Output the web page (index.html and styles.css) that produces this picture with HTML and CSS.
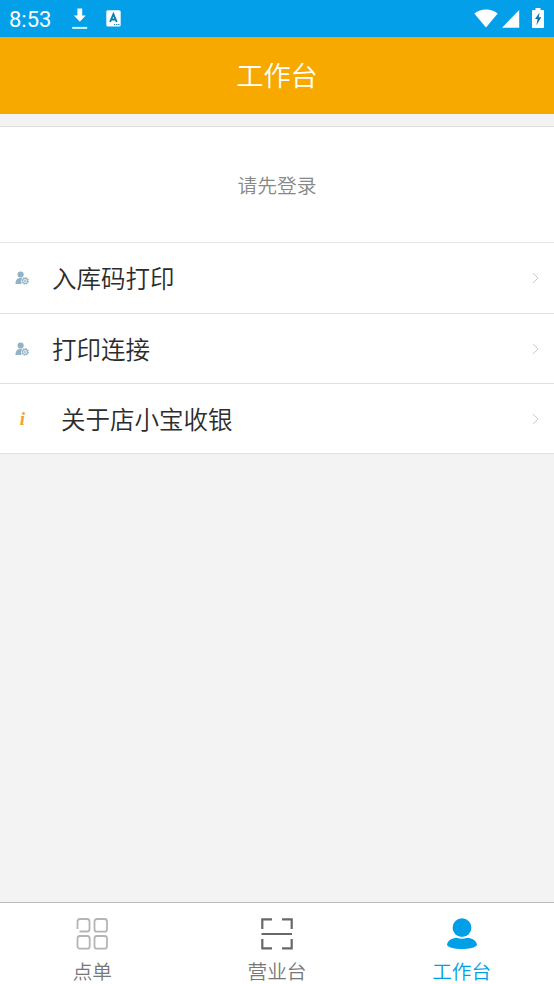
FILE: index.html
```html
<!DOCTYPE html>
<html lang="zh-CN">
<head>
<meta charset="utf-8">
<title>工作台</title>
<link rel="stylesheet" href="styles.css">
</head>
<body>
<svg class="defs" width="0" height="0" aria-hidden="true">
  <symbol id="user-gear" viewBox="0 0 14 14">
    <circle cx="5.6" cy="3.5" r="3.1" fill="currentColor"/>
    <path d="M.4 12.9C.6 9 2.2 7.2 4.5 7.1H7.2C6 8.3 5.7 11.1 6.6 12.9Z" fill="currentColor"/>
    <circle cx="10.1" cy="9.9" r="2.5" fill="none" stroke="currentColor" stroke-width="1.1"/>
    <circle cx="10.1" cy="9.9" r="3.3" fill="none" stroke="currentColor" stroke-width="1.1" stroke-dasharray="1.35 1.24"/>
    <circle cx="10.1" cy="9.9" r=".9" fill="none" stroke="currentColor" stroke-width=".9"/>
  </symbol>
  <symbol id="chevron" viewBox="0 0 7 12">
    <path d="M1 1L6 6L1 11" fill="none" stroke="currentColor" stroke-width="1"/>
  </symbol>
</svg>
<div class="screen">
  <div class="status">
    <span class="time">8:53</span>
    <svg class="download" width="16" height="22" viewBox="0 0 16 22"><path d="M5.4 0.5h4.8v7h3.5L7.8 13.8 1.9 7.5h3.5Z" fill="#fff"/><path d="M.2 18.9h15v2H.2Z" fill="#c8fcff"/></svg>
    <svg class="app" width="15" height="17" viewBox="0 0 15 17"><rect x=".3" y=".3" width="14.4" height="16.2" rx="1.5" fill="#fff"/><path d="M4.1 12L7.4 4.2L10.7 12M5.2 9.5H9.6" fill="none" stroke="#087fac" stroke-width="1.9"/><path d="M8 14.5h1.2M10.2 14.5h1.2M12.2 14.5h1.2" stroke="#087fac" stroke-width="1.2"/></svg>
    <svg class="wifi" width="24" height="19" viewBox="0 0 24 19"><path d="M.3 4.5C6.8-1 17.2-1 23.7 4.5L12 18.5Z" fill="#fff"/></svg>
    <svg class="signal" width="18" height="18" viewBox="0 0 18 18"><path d="M17.2 0V17.7H0Z" fill="#fff"/></svg>
    <svg class="battery" width="12" height="20" viewBox="0 0 12 20"><path d="M3.5 0h5v2H11q1 0 1 1V19q0 1-1 1H1q-1 0-1-1V3q0-1 1-1H3.5Z" fill="#fff"/><path d="M7.6 4.5L3 11H5.6L4.4 17.3L9.3 9.3H6.7Z" fill="#07a"/></svg>
  </div>
  <header class="header">工作台</header>
  <main class="content">
    <div class="login">请先登录</div>
    <div class="row"><svg class="row-icon"><use href="#user-gear"/></svg><span class="label">入库码打印</span><svg class="chevron"><use href="#chevron"/></svg></div>
    <div class="row"><svg class="row-icon"><use href="#user-gear"/></svg><span class="label">打印连接</span><svg class="chevron"><use href="#chevron"/></svg></div>
    <div class="row about"><span class="info">i</span><span class="label">关于店小宝收银</span><svg class="chevron"><use href="#chevron"/></svg></div>
  </main>
  <nav class="tabs">
    <div class="tab">
      <svg width="32" height="32" viewBox="0 0 32 32" fill="none" stroke="#b5b5b5" stroke-width="1.8"><path d="M1.5 11V3.5Q1.5 1 4 1H11Q13.5 1 13.5 3.5V11Q13.5 13.5 11 13.5H3.5"/><rect x="18.5" y="1" width="12.5" height="12.7" rx="2.5"/><rect x="1.5" y="18" width="12.2" height="12.7" rx="2.5"/><rect x="18.5" y="18" width="12.5" height="12.7" rx="2.5"/></svg>
      <span>点单</span>
    </div>
    <div class="tab">
      <svg width="32" height="32" viewBox="0 0 32 32" fill="none" stroke="#686868" stroke-width="2.2"><path d="M1.3 11V1.3H11M21 1.3H30.7V11M1.3 21V30.3H11M21 30.3H30.7V21M.5 16H31"/></svg>
      <span>营业台</span>
    </div>
    <div class="tab active">
      <svg width="32" height="32" viewBox="0 0 32 32" fill="#009fe8"><path d="M1 27C1.5 22.5 6 20.3 10.5 19.8Q16 21.7 21.5 19.8C26 20.3 30.5 22.5 31 27C28 32.3 4 32.3 1 27Z"/><circle cx="16" cy="9.7" r="9.4"/></svg>
      <span>工作台</span>
    </div>
  </nav>
</div>
</body>
</html>
```
FILE: styles.css
```css
* { box-sizing: border-box; }
body { margin: 0; font-family: "Noto Sans CJK SC DemiLight", "Noto Sans CJK SC", sans-serif; font-weight: 350; }
svg { display: block; flex: none; }
.defs { position: absolute; }
.screen { display: flex; flex-direction: column; height: 984px; background: #f3f3f3; }
.status { display: flex; height: 37px; padding: 0 10px 0 9px; background: #03a0e9; color: #fff; }
.time { width: 63px; padding-top: 1px; font: 400 22px/37px Roboto, sans-serif; }
.download { margin-top: 8px; }
.app { margin: 10px 0 0 18px; }
.wifi { margin: 9px 4px 0 auto; }
.signal { margin: 10px 12px 0 0; }
.battery { margin-top: 8px; }
.header { height: 77px; background: #f7a900; color: #fff; font-size: 27.2px; line-height: 75px; text-align: center; }
.content { flex: 1; padding-top: 12px; }
.login { height: 117px; border-top: 1px solid #dfdfdf; border-bottom: 1px solid #e5e5e5; background: #fff; color: #888; font-size: 19.8px; line-height: 115px; text-align: center; }
.row { display: flex; align-items: center; height: 70px; padding: 0 15px; border-bottom: 1px solid #e0e0e0; background: #fff; color: #2c2c2c; }
.login + .row { height: 71px; }
.row-icon { width: 14px; height: 14px; color: #91b3c5; }
.label { margin-left: 23px; font-size: 24.5px; line-height: 36px; }
.info { width: 14px; padding-left: 1px; color: #eda52f; font: italic 700 19px/20px "Liberation Serif", serif; text-align: center; }
.about .label { margin-left: 32px; }
.chevron { width: 7px; height: 12px; margin-left: auto; color: #ccc; }
.tabs { display: flex; height: 82px; border-top: 1px solid #bcbcbc; background: #fff; }
.tab { flex: 1; display: flex; flex-direction: column; align-items: center; padding-top: 15px; color: #777; font-size: 19.7px; line-height: 28px; }
.tab span { margin-top: 7px; }
.active { color: #009fe8; }
```
